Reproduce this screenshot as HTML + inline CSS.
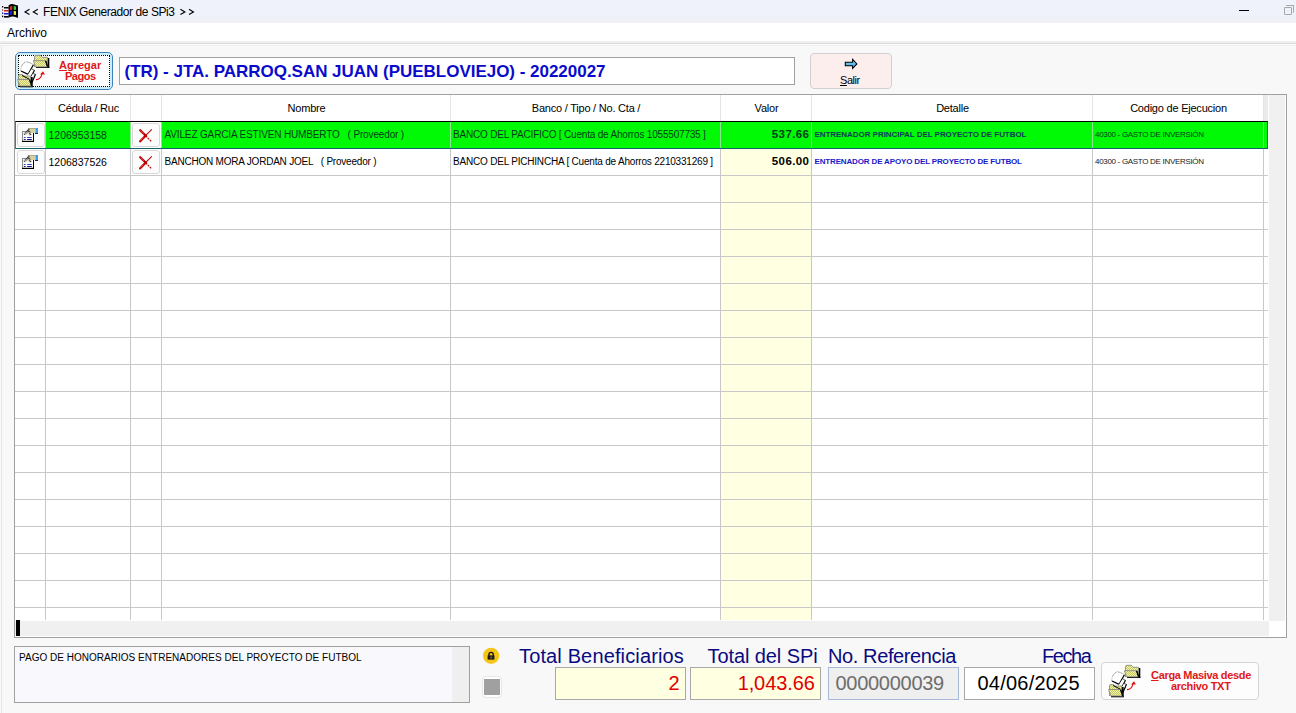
<!DOCTYPE html>
<html><head><meta charset="utf-8">
<style>
html,body{margin:0;padding:0;}
body{width:1296px;height:713px;overflow:hidden;position:relative;background:#f8f8f8;font-family:"Liberation Sans",sans-serif;}
.r{position:absolute;box-sizing:border-box;}
.t{position:absolute;white-space:pre;}
svg.r{overflow:visible;}
</style></head><body>
<div class="r" style="left:0px;top:0px;width:1296px;height:16px;background:#eff2fa;"></div>
<div class="r" style="left:0px;top:16px;width:1296px;height:2px;background:#ecf0fa;"></div>
<div class="r" style="left:0px;top:18px;width:1296px;height:5px;background:#eff1f6;"></div>
<div class="r" style="left:0px;top:23px;width:1296px;height:18px;background:#ffffff;"></div>
<div class="r" style="left:0px;top:41px;width:1296px;height:2px;background:#efefef;"></div>
<div class="r" style="left:0px;top:43px;width:1296px;height:1px;background:#dcdcdc;"></div>
<div class="r" style="left:0px;top:44px;width:1296px;height:1px;background:#fcfcfc;"></div>
<div class="r" style="left:0px;top:45px;width:1296px;height:1px;background:#efefef;"></div>
<div class="r" style="left:1px;top:46px;width:1px;height:667px;background:#e6e6e6;"></div>
<svg class="r" style="left:0px;top:0px" width="20" height="20" viewBox="0 0 20 20">
<path d="M8.5 5.5 Q11 3.6 13.5 4.3 Q16 5 18 5.5 V18 Q15.5 16.8 13 16.6 Q10.5 16.6 8.5 17.8Z" fill="#000"/>
<path d="M10 6.5 L12.3 6 L12.3 9.8 L10 10Z" fill="#e03030"/>
<path d="M13.7 6 L16 6.5 L16 10 L13.7 9.8Z" fill="#30d040"/>
<path d="M10 10.8 L12.3 10.6 L12.3 14.8 L10 15Z" fill="#1a1ad0"/>
<path d="M13.7 10.8 L16 11.2 L16 15 L13.7 14.8Z" fill="#f0f040"/>
<rect x="2" y="6" width="1.2" height="1.5" fill="#000"/><rect x="2" y="9.2" width="1.2" height="1.5" fill="#905050"/><rect x="2" y="12.4" width="1.2" height="1.5" fill="#2020a0"/><rect x="2" y="15.6" width="1.2" height="1.5" fill="#000"/>
<rect x="4" y="7" width="4.6" height="1.5" fill="#000"/><rect x="4" y="10" width="4.6" height="1.5" fill="#d02020"/><rect x="4" y="13" width="4.6" height="1.5" fill="#1a1ac0"/><rect x="4" y="16" width="4.6" height="1.6" fill="#000"/>
</svg>
<svg class="r" style="left:0;top:0" width="200" height="22" viewBox="0 0 200 22"><g fill="none" stroke="#000" stroke-width="1.1"><path d="M29.5 9.3 L25 11.9 L29.5 14.5"/><path d="M37.8 9.3 L33.3 11.9 L37.8 14.5"/><path d="M180.4 9.3 L184.9 11.9 L180.4 14.5"/><path d="M189 9.3 L193.5 11.9 L189 14.5"/></g></svg>
<div class="t" style="left:43px;top:5.84px;font-size:12px;line-height:12px;color:#000;letter-spacing:-0.43px;">FENIX Generador de SPi3</div>
<div class="r" style="left:1239px;top:10px;width:10px;height:1px;background:#000;"></div>
<div class="r" style="left:1284px;top:7px;width:8px;height:8px;border:1px solid #a8a8a8;border-radius:1px;"></div>
<div class="r" style="left:1286px;top:5px;width:8px;height:8px;border-top:1px solid #a8a8a8;border-right:1px solid #a8a8a8;border-radius:1px;"></div>
<div class="t" style="left:7px;top:26.84px;font-size:12px;line-height:12px;color:#000;">Archivo</div>
<div class="r" style="left:15px;top:52px;width:98px;height:38px;border:1px solid #3d80bd;border-radius:5px;background:#fdfdfd;box-shadow:inset 0 0 0 2px #c8eef8;"></div>
<div class="r" style="left:18px;top:55px;width:92px;height:32px;border:1px dotted #000;"></div>
<svg class="r" style="left:9px;top:50px" width="46" height="40" viewBox="0 0 46 40">
<defs><pattern id="ha" width="2" height="2" patternUnits="userSpaceOnUse"><rect width="2" height="2" fill="#f2f2a8"/><rect width="1" height="1" fill="#c8c860"/><rect x="1" y="1" width="1" height="1" fill="#c8c860"/></pattern></defs>
<rect x="38.5" y="8" width="1.8" height="10" fill="#000"/>
<rect x="27" y="16.6" width="13.3" height="1.4" fill="#000"/>
<path d="M25.5 17 V7.2 Q25.5 5.3 27.2 5.3 H31.5 L33 7.3 H38.5 V16.8" fill="url(#ha)" stroke="#8a8a8a" stroke-width="0.9"/>
<path d="M24.4 10.7 H36.7 L38.7 16.8 H26.4 Z" fill="url(#ha)" stroke="#8a8a8a" stroke-width="0.9"/>
<path d="M36.6 10.7 L38.6 16.8" stroke="#000" stroke-width="1.4"/>
<path d="M12 21 L12.4 17 Q14 13 17 12 L19 12.2 Q21.5 13 24.4 14.8" fill="#fff" stroke="#505050" stroke-width="0.8" stroke-dasharray="1.2 0.5"/>
<path d="M12 21 L19.1 24.4 L24.4 14.8 L17 12 L12.4 17Z" fill="#fff"/>
<path d="M12 21 L19.1 24.4 L24.4 14.8" fill="none" stroke="#000" stroke-width="1.2"/>
<path d="M22.5 19 L25.5 20.5 L20.5 29.5 L14 26.5 L19.1 24.4Z" fill="#fff"/>
<path d="M22.6 19 L25.5 20.3" stroke="#404040" stroke-width="0.8"/>
<path d="M25.5 20.3 L20.5 29.5" stroke="#000" stroke-width="1.2"/>
<path d="M24 23.5 L26.5 24.5 L22 35 L17 31 L20.5 29.5Z" fill="#fff"/>
<path d="M24 23.5 L26.5 24.3" stroke="#404040" stroke-width="0.8"/>
<path d="M26.5 24.3 L22.3 34" stroke="#000" stroke-width="1.2"/>
<rect x="22" y="27" width="1.7" height="10" fill="#000"/>
<rect x="11" y="36" width="12.7" height="1.3" fill="#000"/>
<path d="M9.5 36 V26 Q9.5 24.5 11 24.5 H13.5 L15 26 H21.5 V36" fill="url(#ha)" stroke="#8a8a8a" stroke-width="0.9"/>
<path d="M8.5 29.5 H20.5 L23 36 H11 Z" fill="url(#ha)" stroke="#8a8a8a" stroke-width="0.9"/>
<path d="M20.5 29.5 L22.8 36" stroke="#000" stroke-width="1.4"/>
<path d="M13 25.5 L20 29" stroke="#000" stroke-width="1"/>
<path d="M27 29.6 Q31.5 29.8 33 24.2" fill="none" stroke="#e01010" stroke-width="1.1"/>
<path d="M31 24.6 L34 21.2 L35.9 24.6Z" fill="#e01010"/>
</svg>
<div class="t" style="left:59px;top:59.69px;font-size:11px;line-height:11px;color:#e01818;font-weight:bold;"><u>A</u>gregar</div>
<div class="t" style="left:65px;top:71.19px;font-size:11px;line-height:11px;color:#e01818;font-weight:bold;letter-spacing:-0.5px;">Pagos</div>
<div class="r" style="left:119px;top:57px;width:676px;height:28px;border:1px solid #a0a0a0;background:#fff;"></div>
<div class="t" style="left:124.5px;top:62.61px;font-size:17px;line-height:17px;color:#0a0acd;font-weight:bold;letter-spacing:-0.02px;">(TR) - JTA. PARROQ.SAN JUAN (PUEBLOVIEJO) - 20220027</div>
<div class="r" style="left:810px;top:53px;width:82px;height:36px;border:1px solid #d0d0d0;border-radius:4px;background:#fdeeee;"></div>
<svg class="r" style="left:838px;top:55px" width="26" height="18" viewBox="0 0 26 18">
<defs><linearGradient id="ag" x1="0" y1="0" x2="0" y2="1"><stop offset="0" stop-color="#8fdcff"/><stop offset="1" stop-color="#2a9ae0"/></linearGradient></defs>
<path d="M7.3 7.3 H14.6 V4.4 L18.9 8.9 L14.6 13.5 V10.7 H7.3 Z" fill="url(#ag)" stroke="#000" stroke-width="1.05" stroke-linejoin="miter"/>
</svg>
<div class="t" style="left:840px;top:74.69px;font-size:11px;line-height:11px;color:#000;letter-spacing:-0.45px;"><u>S</u>alir</div>
<div class="r" style="left:14px;top:94px;width:1273px;height:544px;border:1px solid #a0a0a0;background:#fff;"></div>
<div class="r" style="left:1269px;top:95px;width:16px;height:526px;background:#f0f0f0;"></div>
<div class="r" style="left:1264px;top:95px;width:4px;height:26px;background:#eaeaea;"></div>
<div class="r" style="left:15px;top:621px;width:1254px;height:15px;background:#f0f0f0;"></div>
<div class="r" style="left:1269px;top:621px;width:17px;height:16px;background:#fff;"></div>
<div class="r" style="left:721px;top:148px;width:90px;height:472px;background:#ffffe1;"></div>
<div class="r" style="left:45px;top:95px;width:1px;height:26px;background:#e4e4e4;"></div>
<div class="r" style="left:130px;top:95px;width:1px;height:26px;background:#e4e4e4;"></div>
<div class="r" style="left:161px;top:95px;width:1px;height:26px;background:#e4e4e4;"></div>
<div class="r" style="left:450px;top:95px;width:1px;height:26px;background:#e4e4e4;"></div>
<div class="r" style="left:720px;top:95px;width:1px;height:26px;background:#e4e4e4;"></div>
<div class="r" style="left:811px;top:95px;width:1px;height:26px;background:#e4e4e4;"></div>
<div class="r" style="left:1092px;top:95px;width:1px;height:26px;background:#e4e4e4;"></div>
<div class="r" style="left:1263px;top:95px;width:1px;height:26px;background:#e4e4e4;"></div>
<div class="r" style="left:45px;top:121px;width:1px;height:499px;background:#c8c8c8;"></div>
<div class="r" style="left:130px;top:121px;width:1px;height:499px;background:#c8c8c8;"></div>
<div class="r" style="left:161px;top:121px;width:1px;height:499px;background:#c8c8c8;"></div>
<div class="r" style="left:450px;top:121px;width:1px;height:499px;background:#c8c8c8;"></div>
<div class="r" style="left:720px;top:121px;width:1px;height:499px;background:#c8c8c8;"></div>
<div class="r" style="left:811px;top:121px;width:1px;height:499px;background:#c8c8c8;"></div>
<div class="r" style="left:1092px;top:121px;width:1px;height:499px;background:#c8c8c8;"></div>
<div class="r" style="left:1263px;top:121px;width:1px;height:499px;background:#c8c8c8;"></div>
<div class="r" style="left:15px;top:148px;width:1253px;height:1px;background:#c8c8c8;"></div>
<div class="r" style="left:15px;top:175px;width:1253px;height:1px;background:#c8c8c8;"></div>
<div class="r" style="left:15px;top:202px;width:1253px;height:1px;background:#c8c8c8;"></div>
<div class="r" style="left:15px;top:229px;width:1253px;height:1px;background:#c8c8c8;"></div>
<div class="r" style="left:15px;top:256px;width:1253px;height:1px;background:#c8c8c8;"></div>
<div class="r" style="left:15px;top:283px;width:1253px;height:1px;background:#c8c8c8;"></div>
<div class="r" style="left:15px;top:310px;width:1253px;height:1px;background:#c8c8c8;"></div>
<div class="r" style="left:15px;top:337px;width:1253px;height:1px;background:#c8c8c8;"></div>
<div class="r" style="left:15px;top:364px;width:1253px;height:1px;background:#c8c8c8;"></div>
<div class="r" style="left:15px;top:391px;width:1253px;height:1px;background:#c8c8c8;"></div>
<div class="r" style="left:15px;top:418px;width:1253px;height:1px;background:#c8c8c8;"></div>
<div class="r" style="left:15px;top:445px;width:1253px;height:1px;background:#c8c8c8;"></div>
<div class="r" style="left:15px;top:472px;width:1253px;height:1px;background:#c8c8c8;"></div>
<div class="r" style="left:15px;top:499px;width:1253px;height:1px;background:#c8c8c8;"></div>
<div class="r" style="left:15px;top:526px;width:1253px;height:1px;background:#c8c8c8;"></div>
<div class="r" style="left:15px;top:553px;width:1253px;height:1px;background:#c8c8c8;"></div>
<div class="r" style="left:15px;top:580px;width:1253px;height:1px;background:#c8c8c8;"></div>
<div class="r" style="left:15px;top:607px;width:1253px;height:1px;background:#c8c8c8;"></div>
<div class="r" style="left:15px;top:121px;width:1253px;height:28px;background:#00fa06;border-top:1px solid #000;border-bottom:1px solid #106468;border-left:1px solid #3b78b0;border-right:1px solid #1a6a50;"></div>
<div class="r" style="left:16px;top:122px;width:29px;height:26px;background:#fff;"></div>
<div class="r" style="left:131px;top:122px;width:30px;height:26px;background:#fff;"></div>
<div class="r" style="left:45px;top:122px;width:1px;height:26px;background:rgba(200,220,200,0.7);"></div>
<div class="r" style="left:130px;top:122px;width:1px;height:26px;background:rgba(200,220,200,0.7);"></div>
<div class="r" style="left:161px;top:122px;width:1px;height:26px;background:rgba(200,220,200,0.7);"></div>
<div class="r" style="left:450px;top:122px;width:1px;height:26px;background:rgba(200,220,200,0.7);"></div>
<div class="r" style="left:720px;top:122px;width:1px;height:26px;background:rgba(200,220,200,0.7);"></div>
<div class="r" style="left:811px;top:122px;width:1px;height:26px;background:rgba(200,220,200,0.7);"></div>
<div class="r" style="left:1092px;top:122px;width:1px;height:26px;background:rgba(200,220,200,0.7);"></div>
<div class="r" style="left:1263px;top:122px;width:1px;height:26px;background:rgba(200,220,200,0.7);"></div>
<div class="t" style="left:46px;top:102.69px;font-size:11px;line-height:11px;color:#000;letter-spacing:-0.22px;width:85px;text-align:center;">Cédula / Ruc</div>
<div class="t" style="left:162px;top:102.69px;font-size:11px;line-height:11px;color:#000;letter-spacing:-0.22px;width:289px;text-align:center;">Nombre</div>
<div class="t" style="left:451px;top:102.69px;font-size:11px;line-height:11px;color:#000;letter-spacing:-0.22px;width:270px;text-align:center;">Banco / Tipo / No. Cta /</div>
<div class="t" style="left:721px;top:102.69px;font-size:11px;line-height:11px;color:#000;letter-spacing:-0.22px;width:91px;text-align:center;">Valor</div>
<div class="t" style="left:812px;top:102.69px;font-size:11px;line-height:11px;color:#000;letter-spacing:-0.22px;width:281px;text-align:center;">Detalle</div>
<div class="t" style="left:1093px;top:102.69px;font-size:11px;line-height:11px;color:#000;letter-spacing:-0.22px;width:171px;text-align:center;">Codigo de Ejecucion</div>
<div class="r" style="left:17px;top:123px;width:28px;height:24px;border:1px solid #d8d8d8;border-radius:3px;background:#fcfcfc;"></div>
<svg class="r" style="left:18px;top:124px" width="24" height="22" viewBox="0 0 24 22">
<rect x="4" y="7" width="12" height="11" fill="#fff"/>
<rect x="4" y="7" width="12" height="1" fill="#8a8a8a"/>
<rect x="4" y="7" width="1" height="11" fill="#8a8a8a"/>
<rect x="15" y="7" width="1" height="11" fill="#000"/>
<rect x="4" y="16.8" width="12" height="1.2" fill="#000"/>
<rect x="5.8" y="13" width="1.8" height="1" fill="#3040a8"/><rect x="9.2" y="13" width="4.6" height="1" fill="#3040a8"/>
<rect x="5.8" y="15" width="1.8" height="1" fill="#101080"/><rect x="9.2" y="15" width="4.6" height="1" fill="#101080"/>
<rect x="11" y="4" width="6.5" height="5" fill="#d8d0a0"/>
<rect x="11" y="4" width="6.5" height="0.8" fill="#a8a070"/>
<path d="M7.5 10.5 L10.5 7.3 L12 11" fill="#e8e4c0"/>
<path d="M6.2 10.6 L10.5 5.8 L12.8 11.6" fill="none" stroke="#404040" stroke-width="2" stroke-dasharray="1 0.6"/>
<rect x="17.5" y="4" width="2.5" height="5.5" fill="#3a9cec"/>
<rect x="17" y="9" width="3" height="1" fill="#102a70"/>
</svg>
<div class="r" style="left:132px;top:123px;width:28px;height:24px;border:1px solid #d8d8d8;border-radius:3px;background:#fcfcfc;"></div>
<svg class="r" style="left:137px;top:127px" width="17" height="17" viewBox="0 0 17 17">
<path d="M14.8 2.3 L8.3 8.8" stroke="#c00000" stroke-width="1.1"/>
<path d="M8.8 8.5 L3.2 14.3" stroke="#c00000" stroke-width="2.3" stroke-linecap="round"/>
<path d="M8.8 9 L14.6 14.8" stroke="#c00000" stroke-width="1.1" stroke-dasharray="2 0.8"/>
<path d="M3.2 3.2 L9 9" stroke="#c00000" stroke-width="2.3" stroke-linecap="round"/>
<path d="M3.4 3.6 L7 7.2 M3.4 13.6 L6.5 10.5" stroke="#f07070" stroke-width="0.6"/>
</svg>
<div class="t" style="left:48.5px;top:129.61px;font-size:10.5px;line-height:10.5px;color:#003c18;">1206953158</div>
<div class="t" style="left:164.5px;top:129.53px;font-size:10px;line-height:10px;color:#003c18;letter-spacing:-0.144px;">AVILEZ GARCIA ESTIVEN HUMBERTO   ( Proveedor )</div>
<div class="t" style="left:453px;top:129.53px;font-size:10px;line-height:10px;color:#003c18;letter-spacing:-0.19px;">BANCO DEL PACIFICO [ Cuenta de Ahorros 1055507735 ]</div>
<div class="t" style="left:720px;top:129.26px;font-size:11.5px;line-height:11.5px;color:#003c18;font-weight:bold;letter-spacing:0.4px;width:89.4px;text-align:right;">537.66</div>
<div class="t" style="left:814.5px;top:131.23px;font-size:8px;line-height:8px;color:#0a3a5a;font-weight:bold;letter-spacing:-0.05px;">ENTRENADOR PRINCIPAL DEL PROYECTO DE FUTBOL</div>
<div class="t" style="left:1095px;top:131.23px;font-size:8px;line-height:8px;color:#003c18;letter-spacing:-0.31px;">40300 - GASTO DE INVERSIÓN</div>
<div class="r" style="left:17px;top:150px;width:28px;height:24px;border:1px solid #d8d8d8;border-radius:3px;background:#fcfcfc;"></div>
<svg class="r" style="left:18px;top:151px" width="24" height="22" viewBox="0 0 24 22">
<rect x="4" y="7" width="12" height="11" fill="#fff"/>
<rect x="4" y="7" width="12" height="1" fill="#8a8a8a"/>
<rect x="4" y="7" width="1" height="11" fill="#8a8a8a"/>
<rect x="15" y="7" width="1" height="11" fill="#000"/>
<rect x="4" y="16.8" width="12" height="1.2" fill="#000"/>
<rect x="5.8" y="13" width="1.8" height="1" fill="#3040a8"/><rect x="9.2" y="13" width="4.6" height="1" fill="#3040a8"/>
<rect x="5.8" y="15" width="1.8" height="1" fill="#101080"/><rect x="9.2" y="15" width="4.6" height="1" fill="#101080"/>
<rect x="11" y="4" width="6.5" height="5" fill="#d8d0a0"/>
<rect x="11" y="4" width="6.5" height="0.8" fill="#a8a070"/>
<path d="M7.5 10.5 L10.5 7.3 L12 11" fill="#e8e4c0"/>
<path d="M6.2 10.6 L10.5 5.8 L12.8 11.6" fill="none" stroke="#404040" stroke-width="2" stroke-dasharray="1 0.6"/>
<rect x="17.5" y="4" width="2.5" height="5.5" fill="#3a9cec"/>
<rect x="17" y="9" width="3" height="1" fill="#102a70"/>
</svg>
<div class="r" style="left:132px;top:150px;width:28px;height:24px;border:1px solid #d8d8d8;border-radius:3px;background:#fcfcfc;"></div>
<svg class="r" style="left:137px;top:154px" width="17" height="17" viewBox="0 0 17 17">
<path d="M14.8 2.3 L8.3 8.8" stroke="#c00000" stroke-width="1.1"/>
<path d="M8.8 8.5 L3.2 14.3" stroke="#c00000" stroke-width="2.3" stroke-linecap="round"/>
<path d="M8.8 9 L14.6 14.8" stroke="#c00000" stroke-width="1.1" stroke-dasharray="2 0.8"/>
<path d="M3.2 3.2 L9 9" stroke="#c00000" stroke-width="2.3" stroke-linecap="round"/>
<path d="M3.4 3.6 L7 7.2 M3.4 13.6 L6.5 10.5" stroke="#f07070" stroke-width="0.6"/>
</svg>
<div class="t" style="left:48.5px;top:156.61px;font-size:10.5px;line-height:10.5px;color:#000;">1206837526</div>
<div class="t" style="left:164.5px;top:156.53px;font-size:10px;line-height:10px;color:#000;letter-spacing:-0.21px;">BANCHON MORA JORDAN JOEL   ( Proveedor )</div>
<div class="t" style="left:453px;top:156.53px;font-size:10px;line-height:10px;color:#000;letter-spacing:-0.2px;">BANCO DEL PICHINCHA [ Cuenta de Ahorros 2210331269 ]</div>
<div class="t" style="left:720px;top:156.26px;font-size:11.5px;line-height:11.5px;color:#000;font-weight:bold;letter-spacing:0.4px;width:89.4px;text-align:right;">506.00</div>
<div class="t" style="left:814.5px;top:158.23px;font-size:8px;line-height:8px;color:#1a1ac8;font-weight:bold;letter-spacing:-0.15px;">ENTRENADOR DE APOYO DEL PROYECTO DE FUTBOL</div>
<div class="t" style="left:1095px;top:158.23px;font-size:8px;line-height:8px;color:#202020;letter-spacing:-0.31px;">40300 - GASTO DE INVERSIÓN</div>
<div class="r" style="left:16px;top:620px;width:4px;height:16px;background:#000;"></div>
<div class="r" style="left:14px;top:646px;width:456px;height:57px;border:1px solid #a0a0a0;background:#f8f8fd;"></div>
<div class="r" style="left:452px;top:647px;width:17px;height:55px;background:#efefef;"></div>
<div class="t" style="left:19px;top:653.03px;font-size:10px;line-height:10px;color:#000;letter-spacing:0.02px;">PAGO DE HONORARIOS ENTRENADORES DEL PROYECTO DE FUTBOL</div>
<svg class="r" style="left:478px;top:644px" width="28" height="24" viewBox="0 0 28 24">
<circle cx="13.1" cy="11.8" r="8.1" fill="#f5c518"/>
<path d="M10.9 12 V10.6 a2.2 2.2 0 0 1 4.4 0 V12" fill="none" stroke="#1a1a1a" stroke-width="1.4"/>
<rect x="9.6" y="11.4" width="6.8" height="4.2" fill="#1a1a1a"/>
<rect x="12.6" y="12.6" width="1" height="1.8" fill="#c0a040"/>
</svg>
<div class="r" style="left:482px;top:676px;width:20px;height:22px;border:1px solid #e6e6e6;border-radius:4px;background:#fff;"></div>
<div class="r" style="left:484px;top:679px;width:16px;height:16px;background:#a0a0a0;"></div>
<div class="t" style="left:519px;top:646.07px;font-size:20px;line-height:20px;color:#0a0a80;letter-spacing:0.14px;">Total Beneficiarios</div>
<div class="t" style="left:707.5px;top:646.07px;font-size:20px;line-height:20px;color:#0a0a80;letter-spacing:-0.09px;">Total del SPi</div>
<div class="t" style="left:828px;top:646.07px;font-size:20px;line-height:20px;color:#0a0a80;letter-spacing:-0.39px;">No. Referencia</div>
<div class="t" style="left:1042px;top:646.07px;font-size:20px;line-height:20px;color:#0a0a80;letter-spacing:-1.45px;">Fecha</div>
<div class="r" style="left:555px;top:667px;width:131px;height:33px;border:1px solid #a8a8a8;background:#ffffe1;"></div>
<div class="r" style="left:690px;top:667px;width:131px;height:33px;border:1px solid #a8a8a8;background:#ffffe1;"></div>
<div class="r" style="left:828px;top:667px;width:131px;height:33px;border:1px solid #a6b9d6;background:#efefef;"></div>
<div class="r" style="left:964px;top:667px;width:131px;height:33px;border:1px solid #a8a8a8;background:#fff;"></div>
<div class="t" style="left:555px;top:673.07px;font-size:20px;line-height:20px;color:#e00000;width:124.5px;text-align:right;">2</div>
<div class="t" style="left:690px;top:673.07px;font-size:20px;line-height:20px;color:#e00000;letter-spacing:-0.1px;width:124.7px;text-align:right;">1,043.66</div>
<div class="t" style="left:835.5px;top:673.07px;font-size:20px;line-height:20px;color:#6d6d6d;letter-spacing:-0.28px;">0000000039</div>
<div class="t" style="left:977.5px;top:673.07px;font-size:20px;line-height:20px;color:#000;letter-spacing:0.22px;">04/06/2025</div>
<div class="r" style="left:1101px;top:662px;width:158px;height:38px;border:1px solid #d4d4d4;border-radius:4px;background:#fdfdfd;"></div>
<svg class="r" style="left:1100px;top:660px" width="46" height="40" viewBox="0 0 46 40">
<defs><pattern id="hb" width="2" height="2" patternUnits="userSpaceOnUse"><rect width="2" height="2" fill="#f2f2a8"/><rect width="1" height="1" fill="#c8c860"/><rect x="1" y="1" width="1" height="1" fill="#c8c860"/></pattern></defs>
<rect x="38.5" y="8" width="1.8" height="10" fill="#000"/>
<rect x="27" y="16.6" width="13.3" height="1.4" fill="#000"/>
<path d="M25.5 17 V7.2 Q25.5 5.3 27.2 5.3 H31.5 L33 7.3 H38.5 V16.8" fill="url(#hb)" stroke="#8a8a8a" stroke-width="0.9"/>
<path d="M24.4 10.7 H36.7 L38.7 16.8 H26.4 Z" fill="url(#hb)" stroke="#8a8a8a" stroke-width="0.9"/>
<path d="M36.6 10.7 L38.6 16.8" stroke="#000" stroke-width="1.4"/>
<path d="M12 21 L12.4 17 Q14 13 17 12 L19 12.2 Q21.5 13 24.4 14.8" fill="#fff" stroke="#505050" stroke-width="0.8" stroke-dasharray="1.2 0.5"/>
<path d="M12 21 L19.1 24.4 L24.4 14.8 L17 12 L12.4 17Z" fill="#fff"/>
<path d="M12 21 L19.1 24.4 L24.4 14.8" fill="none" stroke="#000" stroke-width="1.2"/>
<path d="M22.5 19 L25.5 20.5 L20.5 29.5 L14 26.5 L19.1 24.4Z" fill="#fff"/>
<path d="M22.6 19 L25.5 20.3" stroke="#404040" stroke-width="0.8"/>
<path d="M25.5 20.3 L20.5 29.5" stroke="#000" stroke-width="1.2"/>
<path d="M24 23.5 L26.5 24.5 L22 35 L17 31 L20.5 29.5Z" fill="#fff"/>
<path d="M24 23.5 L26.5 24.3" stroke="#404040" stroke-width="0.8"/>
<path d="M26.5 24.3 L22.3 34" stroke="#000" stroke-width="1.2"/>
<rect x="22" y="27" width="1.7" height="10" fill="#000"/>
<rect x="11" y="36" width="12.7" height="1.3" fill="#000"/>
<path d="M9.5 36 V26 Q9.5 24.5 11 24.5 H13.5 L15 26 H21.5 V36" fill="url(#hb)" stroke="#8a8a8a" stroke-width="0.9"/>
<path d="M8.5 29.5 H20.5 L23 36 H11 Z" fill="url(#hb)" stroke="#8a8a8a" stroke-width="0.9"/>
<path d="M20.5 29.5 L22.8 36" stroke="#000" stroke-width="1.4"/>
<path d="M13 25.5 L20 29" stroke="#000" stroke-width="1"/>
<path d="M27 29.6 Q31.5 29.8 33 24.2" fill="none" stroke="#e01010" stroke-width="1.1"/>
<path d="M31 24.6 L34 21.2 L35.9 24.6Z" fill="#e01010"/>
</svg>
<div class="t" style="left:1151px;top:670.19px;font-size:11px;line-height:11px;color:#e01818;font-weight:bold;letter-spacing:-0.32px;"><u>C</u>arga Masiva desde</div>
<div class="t" style="left:1171px;top:680.69px;font-size:11px;line-height:11px;color:#e01818;font-weight:bold;letter-spacing:-0.31px;">archivo TXT</div>
</body></html>
